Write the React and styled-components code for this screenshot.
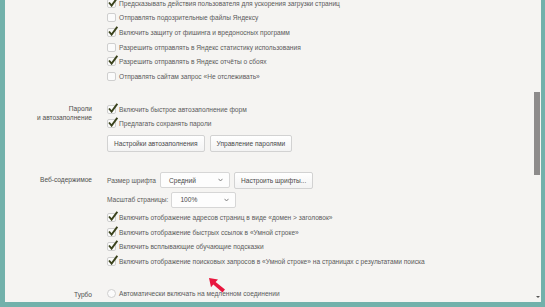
import React from "react";
import styled, { createGlobalStyle } from "styled-components";

const GlobalStyle = createGlobalStyle`
  html, body {
    margin: 0;
    padding: 0;
    background: #f5f4f2;
  }
  body {
    font-family: "Liberation Sans", Arial, sans-serif;
  }
`;

const Frame = styled.div`
  position: relative;
  width: 545px;
  height: 307px;
  box-sizing: border-box;
  overflow: hidden;
  display: flex;
  align-items: flex-start;
  background: #f5f4f2;
  border-left: 5px solid #72b1ab;
  border-right: 4px solid #72b1ab;
  border-bottom: 5px solid #72b1ab;
`;

const Content = styled.div`
  flex: 1;
  margin-top: -4px;
  font-size: 6.6px;
  color: #5b5b5b;
`;

const Section = styled.div`
  display: grid;
  grid-template-columns: 87px 1fr;
  column-gap: 15px;
  margin-top: ${(p) => p.$gap || 0}px;
`;

const Label = styled.div`
  text-align: right;
  line-height: 9px;
  padding-top: ${(p) => p.$top || 3}px;
  color: #4f4f4f;
`;

const Column = styled.div`
  display: flex;
  flex-direction: column;
  margin-top: ${(p) => p.$top || 0}px;
`;

const Row = styled.div`
  flex: none;
  display: flex;
  align-items: center;
  height: 14.6px;
  white-space: nowrap;
  gap: 3px;
`;

const Box = styled.span`
  position: relative;
  width: 7px;
  height: 7px;
  border: 1px solid #cfcfcf;
  border-radius: 2px;
  background: #fbfbfb;
  flex: none;
`;

const Circle = styled(Box)`
  border-radius: 50%;
`;

const Tick = styled.svg`
  position: absolute;
  left: 0px;
  top: -3px;
  width: 10px;
  height: 10px;
`;

const Controls = styled.div`
  flex: none;
  display: flex;
  align-items: center;
  gap: ${(p) => p.$gap || 5}px;
  margin-top: ${(p) => p.$top || 0}px;
  white-space: nowrap;
`;

const Button = styled.div`
  height: 17px;
  box-sizing: border-box;
  padding: 0 6px;
  display: flex;
  align-items: center;
  border: 1px solid #d2d2d2;
  border-radius: 2px;
  background: linear-gradient(#ffffff, #f3f3f3);
  color: #4a4a4a;
`;

const Select = styled.div`
  width: ${(p) => p.$w}px;
  height: 16px;
  box-sizing: border-box;
  padding: 0 6px 0 8px;
  display: flex;
  align-items: center;
  justify-content: space-between;
  border: 1px solid #d6d6d6;
  border-radius: 2px;
  background: #fdfdfd;
  color: #4a4a4a;
`;

const Chevron = styled.svg`
  width: 5px;
  height: 4px;
`;

const ScrollTrack = styled.div`
  position: relative;
  width: 8px;
  height: 302px;
  flex: none;
`;

const Thumb = styled.div`
  margin: 92px 0 0 1px;
  width: 6px;
  height: 83px;
  background: #8d8b8b;
`;

const ArrowDown = styled.div`
  position: absolute;
  left: 3px;
  bottom: 4px;
  width: 0;
  height: 0;
  border-left: 2px solid transparent;
  border-right: 2px solid transparent;
  border-top: 2px solid #555;
`;

const Cursor = styled.svg`
  position: absolute;
  left: 203px;
  top: 277px;
  width: 22px;
  height: 17px;
`;

const Check = ({ checked, children }) => (
  <Row>
    <Box>
      {checked && (
        <Tick viewBox="0 0 10 10">
          <path d="M1 5.5 L3.6 8.6 L9.3 0.8" fill="none" stroke="#3a421c" strokeWidth="1.9" />
        </Tick>
      )}
    </Box>
    <span>{children}</span>
  </Row>
);

const Dropdown = ({ w, children }) => (
  <Select $w={w}>
    <span>{children}</span>
    <Chevron viewBox="0 0 5 4">
      <path d="M0.5 0.8 L2.5 3 L4.5 0.8" fill="none" stroke="#777" strokeWidth="0.9" />
    </Chevron>
  </Select>
);

export default function App() {
  return (
    <>
      <GlobalStyle />
      <Frame>
        <Content>
          <Section>
            <Label />
            <Column>
              <Check checked>Предсказывать действия пользователя для ускорения загрузки страниц</Check>
              <Check>Отправлять подозрительные файлы Яндексу</Check>
              <Check checked>Включить защиту от фишинга и вредоносных программ</Check>
              <Check>Разрешить отправлять в Яндекс статистику использования</Check>
              <Check checked>Разрешить отправлять в Яндекс отчёты о сбоях</Check>
              <Check>Отправлять сайтам запрос «Не отслеживать»</Check>
            </Column>
          </Section>

          <Section $gap={18.5}>
            <Label $top={2}>
              Пароли
              <br />и автозаполнение
            </Label>
            <Column>
              <Check checked>Включить быстрое автозаполнение форм</Check>
              <Check checked>Предлагать сохранять пароли</Check>
              <Controls $top={4}>
                <Button>Настройки автозаполнения</Button>
                <Button>Управление паролями</Button>
              </Controls>
            </Column>
          </Section>

          <Section $gap={19.5}>
            <Label $top={3.5}>Веб-содержимое</Label>
            <Column>
              <Controls $gap={4}>
                <span>Размер шрифта</span>
                <Dropdown w={70}>Средний</Dropdown>
                <Button>Настроить шрифты...</Button>
              </Controls>
              <Controls $gap={3} $top={3}>
                <span>Масштаб страницы:</span>
                <Dropdown w={65}>100%</Dropdown>
              </Controls>
              <Column $top={2.5}>
                <Check checked>Включить отображение адресов страниц в виде «домен &gt; заголовок»</Check>
                <Check checked>Включить отображение быстрых ссылок в «Умной строке»</Check>
                <Check checked>Включить всплывающие обучающие подсказки</Check>
                <Check checked>
                  Включить отображение поисковых запросов в «Умной строке» на страницах с результатами поиска
                </Check>
              </Column>
            </Column>
          </Section>

          <Section $gap={18}>
            <Label $top={3}>Турбо</Label>
            <Column>
              <Row>
                <Circle />
                <span>Автоматически включать на медленном соединении</span>
              </Row>
            </Column>
          </Section>
        </Content>
        <ScrollTrack>
          <Thumb />
          <ArrowDown />
        </ScrollTrack>
        <Cursor viewBox="0 0 22 17">
          <path d="M1 1 L10 2.5 L7.6 5 L17 12.5 L14.5 15.5 L5.3 7.6 L3 10.2 Z" fill="#e8163e" />
        </Cursor>
      </Frame>
    </>
  );
}
